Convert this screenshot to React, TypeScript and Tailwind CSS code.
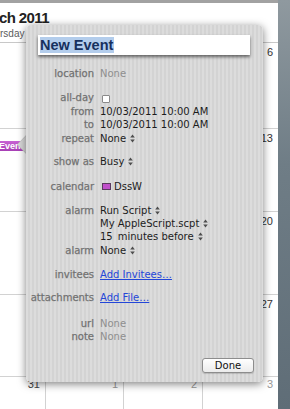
import React from "react";

const Stepper = () => (
  <svg width="5" height="9" viewBox="0 0 5 9" className="ml-[4px] inline-block shrink-0">
    <path d="M0.2 3.6 L2.5 0.4 L4.8 3.6 Z" fill="#4d4d4d" />
    <path d="M0.2 5.4 L2.5 8.6 L4.8 5.4 Z" fill="#4d4d4d" />
  </svg>
);

function Row({
  label,
  children,
  className,
}: {
  label: string;
  children?: React.ReactNode;
  className?: string;
}) {
  return (
    <div className={"flex leading-[13px] whitespace-nowrap " + (className ?? "")}>
      <div className="w-[68px] shrink-0 text-right text-[#6c6c6c] [-webkit-text-stroke:0.25px_#7a7a7a]">{label}</div>
      <div className="ml-[6px] flex items-center text-[#1c1c1c]">{children}</div>
    </div>
  );
}

function Cell({
  n,
  gray,
  first,
  last,
  children,
}: {
  n: string;
  gray?: boolean;
  first?: boolean;
  last?: boolean;
  children?: React.ReactNode;
}) {
  const base = first ? "relative flex flex-col" : "relative flex flex-col border-l border-[#d2d2d2]";
  const num = last
    ? gray
      ? "pt-[1px] pr-[5px] text-right text-[11px] leading-[12px] text-[#9a9a9a]"
      : "pt-[1px] pr-[5px] text-right text-[11px] leading-[12px] text-[#444444]"
    : gray
    ? "pt-[3px] pr-[5px] text-right text-[11px] leading-[12px] text-[#9a9a9a]"
    : "pt-[3px] pr-[5px] text-right text-[11px] leading-[12px] text-[#333333]";
  return (
    <div className={base}>
      <div className={num}>{n}</div>
      {children}
    </div>
  );
}

export default function App() {
  const rows: { h: string; nums: string[] }[] = [
    { h: "h-[86px]", nums: ["3", "4", "5", "6"] },
    { h: "h-[83px]", nums: ["10", "11", "12", "13"] },
    { h: "h-[83px]", nums: ["17", "18", "19", "20"] },
    { h: "h-[82px]", nums: ["24", "25", "26", "27"] },
  ];
  return (
    <div
      className="relative w-[290px] h-[409px] overflow-hidden bg-white flex"
      style={{ fontFamily: '"Liberation Sans", Arial, sans-serif' }}
    >
      {/* calendar */}
      <div className="w-[278px] h-full flex flex-col">
        <div className="h-[3px] bg-[#a2a2a2] shrink-0" />
        <div className="h-[40px] shrink-0 border-b border-[#c8c8c8] flex flex-col overflow-hidden whitespace-nowrap">
          <div className="mt-[7px] ml-[-1px] text-[15px] leading-[16px] font-bold tracking-[-0.6px] text-[#222222]">
            ch 2011
          </div>
          <div className="mt-[3px] text-[10px] leading-[10px] text-[#5c5c5c]">rsday</div>
        </div>
        {rows.map((r, i) => (
          <div
            key={i}
            className={r.h + " shrink-0 border-b border-[#d2d2d2] grid grid-cols-[45px_78px_79px_76px]"}
          >
            <Cell n={r.nums[0]} first>
              {i === 1 && (
                <div className="mt-[-3px] ml-[-24px] h-[10px] w-[60px] rounded-[3px] bg-[linear-gradient(180deg,#c862d4,#a73fb5)] pl-[2px] text-[9px] leading-[10px] font-bold text-white whitespace-nowrap overflow-hidden">
                  New Event
                </div>
              )}
            </Cell>
            <Cell n={r.nums[1]} />
            <Cell n={r.nums[2]} />
            <Cell n={r.nums[3]} />
          </div>
        ))}
        <div className="flex-1 grid grid-cols-[45px_78px_79px_76px]">
          <Cell n="31" first last />
          <Cell n="1" gray last />
          <Cell n="2" gray last />
          <Cell n="3" gray last />
        </div>
      </div>
      {/* desktop strip */}
      <div className="flex-1 h-full bg-[linear-gradient(180deg,#8f999f,#6f7d86_40%,#5f6d77)]" />

      {/* popover arrow */}
      <svg
        className="absolute left-[16px] top-[133px]"
        width="12"
        height="24"
        viewBox="0 0 12 24"
      >
        <path d="M12 0 L1 11.5 L12 23 Z" fill="#c9c9c9" />
        <path d="M12 1 L2 11.5 L12 22 Z" fill="#d9d9d9" />
      </svg>

      {/* popover */}
      <div
        className="absolute left-[26px] top-[25px] w-[237px] h-[357px] rounded-[5px] bg-[image:repeating-linear-gradient(90deg,#dcdcdc_0px,#dcdcdc_2px,#d3d3d3_2px,#d3d3d3_4px)] shadow-[0_2px_8px_rgba(0,0,0,0.5)] flex flex-col text-[10px]"
        style={{ fontFamily: '"DejaVu Sans", Verdana, sans-serif' }}
      >
        <div className="mt-[10px] ml-[12px] w-[212px] h-[20px] shrink-0 bg-white shadow-[0_2px_3px_rgba(0,0,0,0.55)] flex items-center pl-[2px]">
          <span
            className="bg-[#b3cdec] text-[#17305e] font-bold text-[14.5px] leading-[16px] pr-[1px]"
            style={{ fontFamily: '"Liberation Sans", Arial, sans-serif' }}
          >
            New Event
          </span>
        </div>

        <Row className="mt-[12px]" label="location">
          <span className="text-[#8e8e8e]">None</span>
        </Row>
        <Row className="mt-[11px]" label="all-day">
          <span className="mt-[2px] w-[8px] h-[8px] ml-[2px] rounded-[1px] border border-[#8a8a8a] bg-white inline-block" />
        </Row>
        <Row className="mt-[1px]" label="from">
          <span>10/03/2011 10:00 AM</span>
        </Row>
        <Row label="to">
          <span>10/03/2011 10:00 AM</span>
        </Row>
        <Row className="mt-[1px]" label="repeat">
          <span>None</span>
          <Stepper />
        </Row>
        <Row className="mt-[10px]" label="show as">
          <span>Busy</span>
          <Stepper />
        </Row>
        <Row className="mt-[12px]" label="calendar">
          <span className="ml-[2px] w-[9px] h-[7px] border border-[#5a3a5e] bg-[#c04fca] inline-block" />
          <span className="ml-[3px]">DssW</span>
        </Row>
        <Row className="mt-[11px]" label="alarm">
          <span>Run Script</span>
          <Stepper />
        </Row>
        <Row label="">
          <span>My AppleScript.scpt</span>
          <Stepper />
        </Row>
        <Row label="">
          <span>15</span>
          <span className="ml-[5px]">minutes before</span>
          <Stepper />
        </Row>
        <Row className="mt-[1px]" label="alarm">
          <span>None</span>
          <Stepper />
        </Row>
        <Row className="mt-[11px]" label="invitees">
          <span className="text-[#2346d8] underline">Add Invitees…</span>
        </Row>
        <Row className="mt-[10px]" label="attachments">
          <span className="text-[#2346d8] underline">Add File…</span>
        </Row>
        <Row className="mt-[13px]" label="url">
          <span className="text-[#8e8e8e]">None</span>
        </Row>
        <Row label="note">
          <span className="text-[#8e8e8e]">None</span>
        </Row>

        <div className="mt-auto mb-[9px] flex justify-end pr-[9px]">
          <div className="w-[52px] h-[15px] rounded-[3px] border border-[#8d8d8d] bg-[linear-gradient(180deg,#ffffff,#ebebeb)] flex items-center justify-center text-[10px] leading-[13px] text-[#111111] shadow-[0_1px_1px_rgba(0,0,0,0.15)]">
            Done
          </div>
        </div>
      </div>
    </div>
  );
}
